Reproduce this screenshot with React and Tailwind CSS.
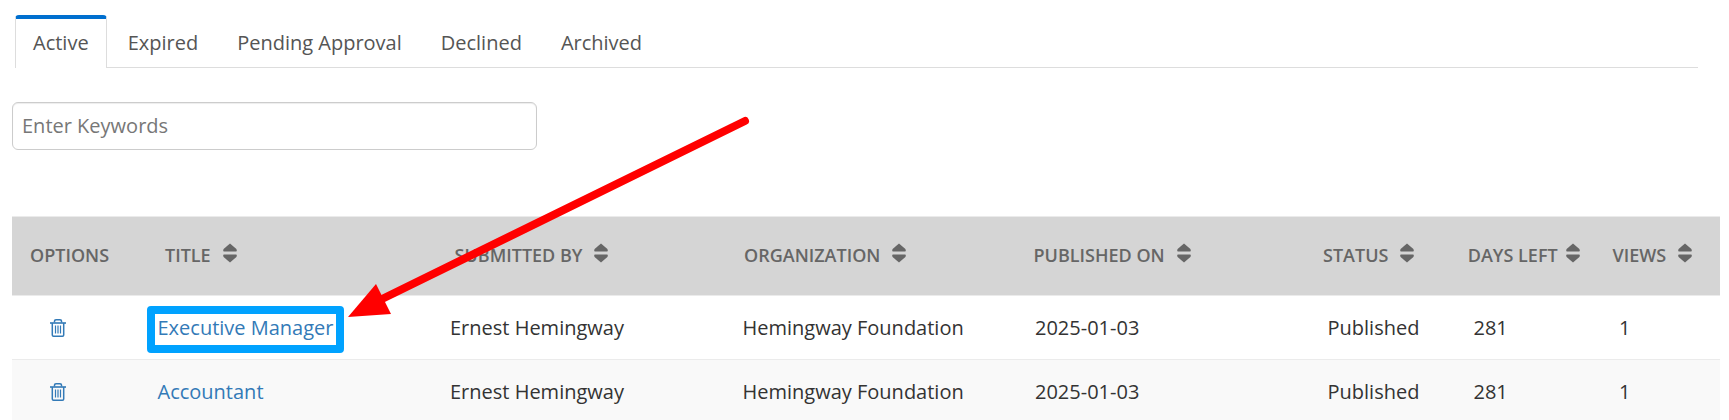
const tabs = ['Active', 'Expired', 'Pending Approval', 'Declined', 'Archived'];

const columns = [
  { label: 'Options' },
  { label: 'Title', sortable: true },
  { label: 'Submitted by', sortable: true },
  { label: 'Organization', sortable: true },
  { label: 'Published on', sortable: true },
  { label: 'Status', sortable: true },
  { label: 'Days left', sortable: true, tight: true },
  { label: 'Views', sortable: true },
];

const postings = [
  {
    id: 1,
    title: 'Executive Manager',
    submittedBy: 'Ernest Hemingway',
    organization: 'Hemingway Foundation',
    publishedOn: '2025-01-03',
    status: 'Published',
    daysLeft: 281,
    views: 1,
    highlighted: true,
  },
  {
    id: 2,
    title: 'Accountant',
    submittedBy: 'Ernest Hemingway',
    organization: 'Hemingway Foundation',
    publishedOn: '2025-01-03',
    status: 'Published',
    daysLeft: 281,
    views: 1,
  },
];

const headRowClass =
  'grid grid-cols-[540fr_1158fr_1158fr_1158fr_1158fr_579fr_579fr_502fr] items-center h-20 pb-0.5 border-y border-[#ebebeb] bg-[#d5d5d5]';
const bodyRowClass =
  'grid grid-cols-[265fr_585fr_585fr_585fr_585fr_292fr_291fr_228fr] items-center h-16 border-b border-[#ebebeb] even:bg-[#f9f9f9]';
const cellClass = 'pl-[13px]';

const SortIcon = () => (
  <svg className="w-[14px] h-5 mb-1 shrink-0" viewBox="0 0 14 20" fill="#666" aria-hidden="true">
    <path d="M7 0.5 L13.4 6 Q14.4 8.4 13 8.6 H1 Q-0.4 8.4 0.6 6 Z" />
    <path d="M7 19.5 L13.4 14 Q14.4 11.6 13 11.4 H1 Q-0.4 11.6 0.6 14 Z" />
  </svg>
);

const TrashIcon = () => (
  <svg className="w-4 h-[18px]" viewBox="0 0 16 18" fill="none" stroke="#337ab7" aria-hidden="true">
    <path d="M0 4 H16" strokeWidth="1.6" />
    <path d="M4.5 3.5 V2 Q4.5 0.8 6 0.8 H10 Q11.5 0.8 11.5 2 V3.5" strokeWidth="1.5" />
    <path d="M2.3 4 V16 Q2.3 17.2 3.5 17.2 H12.5 Q13.7 17.2 13.7 16 V4" strokeWidth="1.5" />
    <path d="M5.5 6.5 V14.5 M8 6.5 V14.5 M10.5 6.5 V14.5" strokeWidth="1.2" />
  </svg>
);

// Red pointer leading to the highlighted posting
const Arrow = () => (
  <svg
    className="absolute left-[348px] top-[114px] w-[404px] h-[206px] pointer-events-none"
    viewBox="348 114 404 206"
    aria-hidden="true"
  >
    <path d="M745 121 L380 300" stroke="#f00" strokeWidth="8" strokeLinecap="round" />
    <path d="M348 317 L376 284 L391 314 Z" fill="#f00" />
  </svg>
);

const App = () => (
  <div className="relative h-screen overflow-hidden bg-white pl-3 pr-[9px] pt-[15px] font-['Open_Sans',sans-serif] text-xl text-[#333]">
    <nav className="flex gap-[3px] ml-[3px] mr-[22px] border-b border-[#ddd] text-[#555]">
      {tabs.map((tab, index) => (
        <a
          key={tab}
          href="#"
          className={
            index === 0
              ? '-mb-px h-[53px] px-[17px] pt-[10px] rounded-t-[4px] border-x border-t-4 border-x-[#ddd] border-t-[#006fcf] bg-white'
              : 'h-[52px] px-[17px] pt-[14px] border-x border-transparent'
          }
        >
          {tab}
        </a>
      ))}
    </nav>

    <input
      type="text"
      aria-label="Enter Keywords"
      placeholder="Enter Keywords"
      className="block mt-[34px] w-[525px] h-12 px-[9px] pb-0.5 rounded-md border border-[#ccc] shadow-[inset_0_1px_1px_rgba(0,0,0,0.075)] placeholder:text-[#777]"
    />

    <table className="block mt-[66px] whitespace-nowrap">
      <thead className="block text-lg font-semibold uppercase text-[#666]">
        <tr className={headRowClass}>
          {columns.map(({ label, sortable, tight }) => (
            <th key={label} className={`pl-[18px] flex items-center font-semibold ${tight ? 'gap-2' : 'gap-3'}`}>
              {label}
              {sortable && <SortIcon />}
            </th>
          ))}
        </tr>
      </thead>
      <tbody className="block">
        {postings.map((posting) => (
          <tr key={posting.id} className={bodyRowClass}>
            <td className="pl-[38px]">
              <button type="button" aria-label="Delete" className="block">
                <TrashIcon />
              </button>
            </td>
            <td className={`${cellClass} relative`}>
              <a href="#" className="text-[#337ab7]">{posting.title}</a>
              {posting.highlighted && (
                <span className="absolute left-0.5 -top-2 w-[197px] h-[47px] rounded border-8 border-[#00a2ff]"></span>
              )}
            </td>
            <td className={cellClass}>{posting.submittedBy}</td>
            <td className={cellClass}>{posting.organization}</td>
            <td className={cellClass}>{posting.publishedOn}</td>
            <td className={cellClass}>{posting.status}</td>
            <td className={cellClass}>{posting.daysLeft}</td>
            <td className={cellClass}>{posting.views}</td>
          </tr>
        ))}
      </tbody>
    </table>

    <Arrow />
  </div>
);

export default App;
